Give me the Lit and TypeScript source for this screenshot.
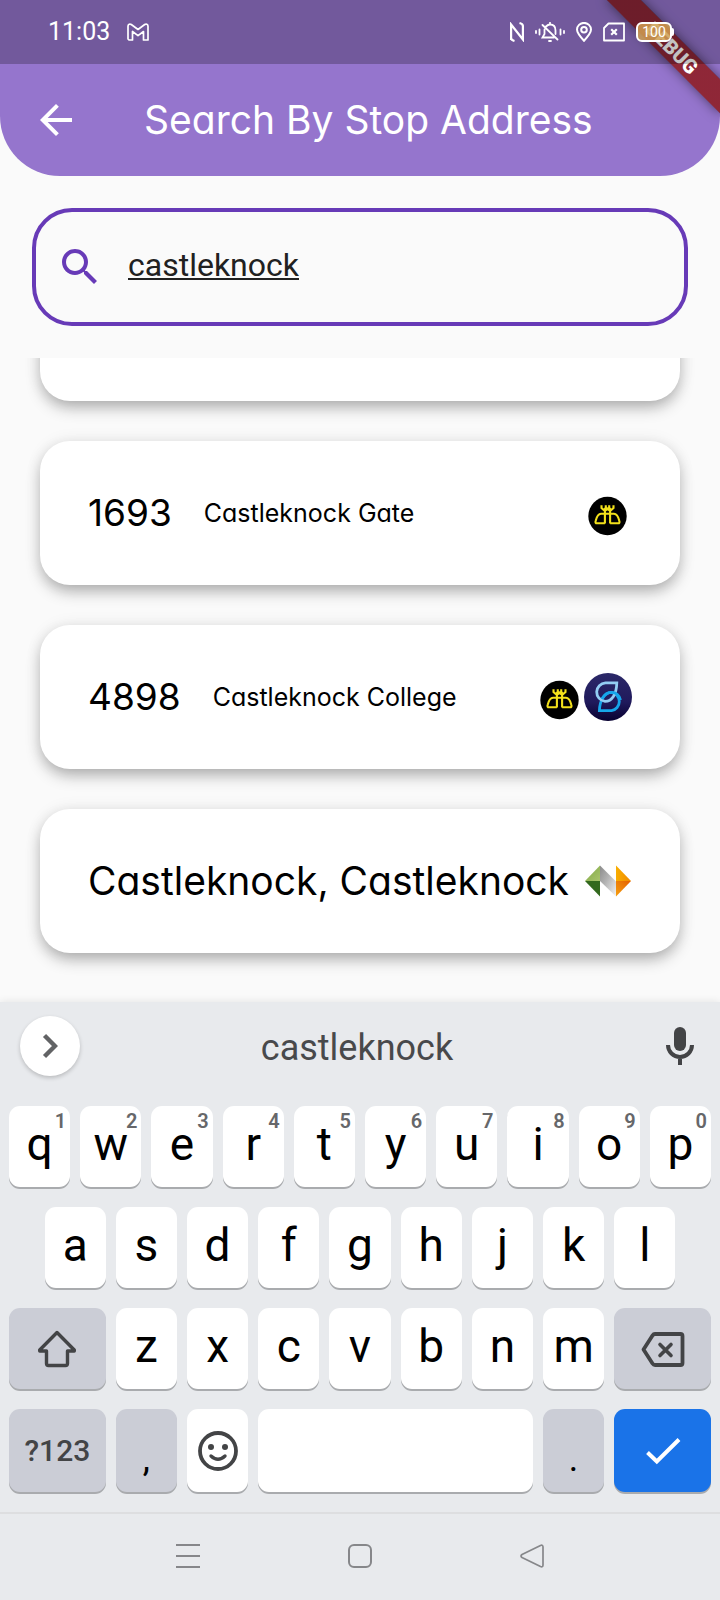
import { LitElement, html, css, nothing, type TemplateResult } from "lit";
import { customElement, property, state } from "lit/decorators.js";
import { classMap } from "lit/directives/class-map.js";

type Operator = "bus" | "swords" | "national";
interface Stop {
  code?: string;
  name: string;
  operators: Operator[];
}

const STOPS: Stop[] = [
  { code: "1693", name: "Castleknock Gate", operators: ["bus"] },
  { code: "4898", name: "Castleknock College", operators: ["bus", "swords"] },
  { name: "Castleknock, Castleknock", operators: ["national"] },
];

const busLogo = html`<svg class="logo" viewBox="-24 -24 48 48" aria-hidden="true">
  <circle cx="-0.500" cy="3" r="19.2" fill="#000" />
  <g transform="translate(-0.500 3)" fill="none" stroke="#f3e11b" stroke-width="2.1">
    <path d="M-6 -10.8V-8L-2.600 -5V7.500M-1.700 -10.800V-8.500L-3.500 -6M6 -10.800V-8L2.600 -5V7.500M1.700 -10.800V-8.500L3.500 -6M-2 -8.800L2 -5.500M2 -8.800L-2 -5.500" />
    <path stroke-linejoin="round"
      d="M-2.600 7.300H-10.500Q-12.600 7.300 -11.800 4.800Q-10 -2.200 -6.500 -2.200H6.500Q10 -2.200 11.800 4.800Q12.600 7.300 10.500 7.300H2.600" />
  </g>
</svg>`;

const swordsLogo = html`<svg class="logo" viewBox="-24 -24 48 48" aria-hidden="true">
  <defs>
    <linearGradient id="night" x1="0" y1="0" x2="0" y2="1">
      <stop offset="0" stop-color="#2b2868" />
      <stop offset=".6" stop-color="#201a5c" />
      <stop offset="1" stop-color="#070030" />
    </linearGradient>
  </defs>
  <circle r="24" fill="url(#night)" />
  <g fill="none" stroke-width="2.8">
    <path stroke="#16a6ea" d="M-8.600 13.700H3.500A9.500 9.300 0 0 0 3.500 -4.600C-3 -4.600 -8.300 3 -8.600 13.700z" />
    <path stroke="#93cdf3" d="M8.800 -14.200H-2.500A9.500 9.300 0 0 0 -3 4.300C4 4.300 8.500 -2.500 8.800 -14.200z" />
    <path stroke="#16a6ea" d="M-6 2C-3.500 -3 -1 -4.600 3.500 -4.600A9 9 0 0 1 12.500 3" />
  </g>
</svg>`;

const nationalLogo = html`<svg class="logo" viewBox="-24 -24 48 48" aria-hidden="true">
  <defs>
    <linearGradient id="leaf" x1="0" y1="0" x2="1" y2="1">
      <stop offset="0" stop-color="#7fa845" />
      <stop offset="1" stop-color="#a9c46c" />
    </linearGradient>
    <linearGradient id="steel" x1="0" y1="0" x2="1" y2="1">
      <stop offset="0" stop-color="#8b8b8b" />
      <stop offset=".45" stop-color="#b4b4b4" />
      <stop offset="1" stop-color="#f4f4f4" />
    </linearGradient>
    <linearGradient id="sun" x1="0" y1="0" x2="1" y2="0">
      <stop offset="0" stop-color="#f9ae00" />
      <stop offset="1" stop-color="#f08a00" />
    </linearGradient>
    <linearGradient id="ember" x1="0" y1="1" x2="1" y2="0">
      <stop offset="0" stop-color="#f6a010" />
      <stop offset="1" stop-color="#e45f00" />
    </linearGradient>
  </defs>
  <path fill="url(#leaf)" d="M-23 0 -8 -15.500V0z" />
  <path fill="#33691e" d="M-23 0H-8V15.500z" />
  <path fill="url(#steel)" d="M-8 -15.500 8 0.500V15.500L-8 0z" />
  <path fill="url(#sun)" d="M8 -15.500 23 0H8z" />
  <path fill="url(#ember)" d="M8 15.500V0H23z" />
</svg>`;

const LOGOS: Record<Operator, TemplateResult> = {
  bus: busLogo,
  swords: swordsLogo,
  national: nationalLogo,
};

@customElement("status-bar")
class StatusBar extends LitElement {
  static styles = css`
    :host {
      display: flex;
      align-items: center;
      justify-content: space-between;
      box-sizing: border-box;
      height: 64px;
      padding: 0 46px 0 48px;
      background: rgba(0, 0, 0, 0.235);
      color: #fff;
      font-family: Roboto, sans-serif;
    }
    .side {
      display: flex;
      align-items: center;
      gap: 11px;
    }
    .clock {
      font-size: 25px;
      line-height: 32px;
      margin-right: 6px;
    }
    svg {
      display: block;
      fill: none;
      stroke: #fff;
      stroke-width: 2;
    }
    .battery {
      display: flex;
      align-items: center;
    }
    .cell {
      box-sizing: border-box;
      width: 36px;
      height: 20px;
      border: 2px solid #fff;
      border-radius: 6px;
      background: rgba(216, 166, 84, 0.8);
      font-size: 14px;
      line-height: 16px;
      text-align: center;
    }
    .nub {
      width: 2px;
      height: 8px;
      border-radius: 0 2px 2px 0;
      background: #fff;
    }
  `;
  render() {
    return html`
      <div class="side">
        <span class="clock">11:03</span>
        <svg width="22" height="18" viewBox="0 0 22 18">
          <path stroke-width="1.7" stroke-linejoin="round"
            d="M1 16V3.200C1 1 3 .6 4.300 1.500L11 6.500 17.700 1.500C19 .6 21 1 21 3.200V17H16.500V8.500L11 12.600 5.500 8.500V17H2z" />
        </svg>
      </div>
      <div class="side">
        <svg width="14" height="20" viewBox="0 0 14 20">
          <path stroke-width="2.2" d="M1.100 18V2.500L12.900 17.500V3.500M1.100 10.500V16Q1.100 18 4.500 19M12.900 9.500V4Q12.900 2 9.500 1" />
        </svg>
        <svg width="30" height="20" viewBox="0 0 30 20">
          <path stroke-width="1.800" stroke-linecap="round"
            d="M1 9v2M4.500 7.500v5M29 9v2M25.500 7.500v5M15 .8v1.400M14 19h2M11 4.500Q13 2.500 15 2.500C19 2.500 20.500 5.500 20.500 8.500V12M9.500 7.500V12L7.500 15.500H19M7.500 3 22.500 17.500" />
        </svg>
        <svg width="16" height="20" viewBox="0 0 16 20">
          <path d="M8 18.800C4 14.500 1 11 1 7.600A7 6.700 0 0 1 15 7.600C15 11 12 14.500 8 18.800z" />
          <circle cx="8" cy="7.800" r="2.800" />
        </svg>
        <svg width="22" height="20" viewBox="0 0 22 20">
          <path stroke-width="1.800" stroke-linejoin="round" d="M5.500 1.500H21V18.500H1V6z" />
          <path stroke-width="2.200" d="M8.200 7.200l5.600 5.600M13.800 7.200l-5.600 5.600" />
        </svg>
        <div class="battery"><span class="cell">100</span><span class="nub"></span></div>
      </div>
    `;
  }
}

@customElement("stop-card")
class StopCard extends LitElement {
  @property({ attribute: false }) stop?: Stop;
  static styles = css`
    :host {
      display: flex;
      flex: none;
      align-items: center;
      box-sizing: border-box;
      height: 144px;
      padding: 0 48px;
      border-radius: 30px;
      background: #fff;
      box-shadow: 0 8px 16px -2px rgba(0, 0, 0, 0.3), 0 0 16px rgba(0, 0, 0, 0.08);
      color: #000;
      font-family: Inter, sans-serif;
      font-feature-settings: "cv11";
    }
    .code {
      margin-right: 32px;
      font-size: 37px;
      line-height: 48px;
    }
    .name {
      font-size: 25px;
      line-height: 32px;
    }
    .solo {
      font-size: 39px;
      line-height: 48px;
      white-space: nowrap;
    }
    .operators {
      display: flex;
      margin-left: auto;
    }
    .logo {
      display: block;
      width: 48px;
      height: 48px;
    }
  `;
  render() {
    const stop = this.stop;
    if (!stop) return nothing;
    return html`
      ${stop.code ? html`<span class="code">${stop.code}</span>` : nothing}
      <span class=${stop.code ? "name" : "solo"}>${stop.name}</span>
      <span class="operators">${stop.operators.map((o) => LOGOS[o])}</span>
    `;
  }
}

@customElement("soft-keyboard")
class SoftKeyboard extends LitElement {
  @property() suggestion = "";
  static styles = css`
    :host {
      display: block;
      background: #e8eaed;
      box-shadow: 0 0 8px rgba(0, 0, 0, 0.1);
      font-family: Roboto, sans-serif;
    }
    button {
      margin: 0;
      padding: 0;
      border: 0;
      background: none;
      color: inherit;
      font: inherit;
    }
    svg {
      display: block;
      fill: none;
      stroke: #434446;
    }
    .strip {
      display: grid;
      grid-template-columns: 60px 1fr 80px;
      align-items: center;
      height: 88px;
      padding-left: 20px;
    }
    .strip .more {
      display: grid;
      place-items: center;
      width: 60px;
      height: 60px;
      border-radius: 50%;
      background: #fff;
      box-shadow: 0 2px 4px rgba(0, 0, 0, 0.2);
    }
    .strip .word {
      padding: 4px 6px 0 0;
      color: #48494b;
      font-size: 36px;
      line-height: 44px;
    }
    .strip .mic {
      display: grid;
      place-items: center;
    }
    .keys {
      display: grid;
      grid-template-columns: repeat(20, 1fr);
      grid-template-rows: 81px 81px 81px 83px;
      gap: 20px 10px;
      padding: 16px 9px 20px;
    }
    .keys .key {
      position: relative;
      display: flex;
      align-items: center;
      justify-content: center;
      grid-column: span 2;
      border-radius: 11px;
      background: #fff;
      box-shadow: 0 2px 0 #a9abae;
      color: #000;
      font-size: 46px;
    }
    .key .glyph {
      padding-bottom: 6px;
      line-height: 54px;
    }
    .keys .indent {
      grid-column: 2 / span 2;
    }
    .keys .wide {
      grid-column: span 3;
    }
    .keys .space {
      grid-column: span 8;
    }
    .keys .grey {
      background: #cbcdd6;
    }
    .keys .enter {
      background: #1a73e8;
    }
    .key .hint {
      position: absolute;
      top: 5px;
      right: 4px;
      color: #66676a;
      font-size: 20px;
      font-weight: 600;
      line-height: 20px;
    }
    .key .mode {
      color: #434446;
      font-size: 30px;
      font-weight: 500;
    }
    .key .mark {
      padding-top: 16px;
      font-size: 36px;
      line-height: 40px;
    }
    .nav {
      display: grid;
      grid-template-columns: repeat(3, 1fr);
      height: 84px;
      padding: 0 102px 2px;
      border-top: 2px solid #dddee0;
    }
    .nav button {
      display: grid;
      place-items: center;
    }
    .nav svg {
      stroke: #86878a;
      stroke-width: 2;
    }
  `;

  private letter(char: string, hint = "", indent = false) {
    return html`<button class=${classMap({ key: true, indent })}>
      <span class="glyph">${char}</span>${hint ? html`<span class="hint">${hint}</span>` : nothing}
    </button>`;
  }

  render() {
    return html`
      <div class="strip">
        <button class="more" aria-label="More">
          <svg width="16" height="26" viewBox="0 0 16 26">
            <path d="M2.500 2.500 13 13 2.500 23.500" stroke="#626365" stroke-width="4.400" />
          </svg>
        </button>
        <button class="word">${this.suggestion}</button>
        <button class="mic" aria-label="Voice input">
          <svg width="28" height="38" viewBox="0 0 28 38">
            <rect x="8" y="0" width="12" height="24" rx="6" fill="#434446" stroke="none" />
            <path d="M2 18a12 12 0 0 0 24 0M14 30v8" stroke-width="4" />
          </svg>
        </button>
      </div>
      <div class="keys">
        ${[..."qwertyuiop"].map((c, i) => this.letter(c, String((i + 1) % 10)))}
        ${[..."asdfghjkl"].map((c, i) => this.letter(c, "", i === 0))}
        <button class="key grey wide" aria-label="Shift">
          <svg width="40" height="40" viewBox="0 0 40 40">
            <path stroke-width="3.400" stroke-linejoin="round"
              d="M20 3.500 37.300 21V22H30.500V34.500Q30.500 36.500 28.500 36.500H11.500Q9.500 36.500 9.500 34.500V22H2.700V21z" />
          </svg>
        </button>
        ${[..."zxcvbnm"].map((c) => this.letter(c))}
        <button class="key grey wide" aria-label="Backspace">
          <svg width="44" height="36" viewBox="0 0 44 36">
            <path stroke-width="3.800" stroke-linejoin="round"
              d="M14 3H39.500A2 2 0 0 1 41.500 5V32A2 2 0 0 1 39.500 34H14Q12.500 34 11.500 32.500L2.500 18.500 11.500 4.500Q12.500 3 14 3z" />
            <path stroke-width="3.600" stroke-linecap="round" d="M19 13.500l11 11M30 13.500l-11 11" />
          </svg>
        </button>
        <button class="key grey wide"><span class="mode">?123</span></button>
        <button class="key grey"><span class="mark">,</span></button>
        <button class="key" aria-label="Emoji">
          <svg width="40" height="40" viewBox="0 0 40 40">
            <circle cx="20" cy="20" r="18" stroke-width="3.800" />
            <circle cx="13" cy="16" r="3" fill="#434446" stroke="none" />
            <circle cx="27" cy="16" r="3" fill="#434446" stroke="none" />
            <path d="M13 25q7 6.500 14 0" stroke-width="3.400" stroke-linecap="round" />
          </svg>
        </button>
        <button class="key space" aria-label="Space"></button>
        <button class="key grey"><span class="mark">.</span></button>
        <button class="key enter wide" aria-label="Done">
          <svg width="36" height="28" viewBox="0 0 36 28">
            <path d="M2.500 15.500 11.800 24.500 34 2.500" stroke="#fff" stroke-width="4" />
          </svg>
        </button>
      </div>
      <div class="nav">
        <button aria-label="Recents">
          <svg width="24" height="24" viewBox="0 0 24 24"><path d="M0 1h24M0 12h24M0 23h24" /></svg>
        </button>
        <button aria-label="Home">
          <svg width="24" height="24" viewBox="0 0 24 24"><rect x="1" y="1" width="22" height="22" rx="5" /></svg>
        </button>
        <button aria-label="Back">
          <svg width="24" height="24" viewBox="0 0 24 24">
            <path stroke-width="1.700" stroke-linejoin="round"
              d="M20.500 1.500Q23 .5 23 3V21Q23 23.500 20.500 22.500L2 13.500Q0 12 2 10.500z" />
          </svg>
        </button>
      </div>
    `;
  }
}

@customElement("app-root")
class AppRoot extends LitElement {
  @state() private query = "castleknock";
  static styles = css`
    :host {
      display: block;
    }
    .page {
      position: relative;
      display: flex;
      flex-direction: column;
      height: 100vh;
      overflow: hidden;
      background: #fafafa;
    }
    .top {
      border-radius: 0 0 60px 60px;
      background: #9575cd;
    }
    .status {
      position: relative;
      z-index: 2;
    }
    .toolbar {
      display: flex;
      align-items: center;
      gap: 64px;
      height: 112px;
      padding: 0 32px;
    }
    .back {
      padding: 0;
      border: 0;
      background: none;
    }
    .icon {
      display: block;
      width: 48px;
      height: 48px;
    }
    .title {
      margin: 0;
      color: #fff;
      font-family: Inter, sans-serif;
      font-feature-settings: "cv11";
      font-size: 39px;
      font-weight: 400;
      line-height: 48px;
      white-space: nowrap;
    }
    .ribbon {
      position: absolute;
      z-index: 1;
      top: 56px;
      right: -80px;
      width: 160px;
      height: 24px;
      transform: rotate(45deg);
      transform-origin: 50% -56px;
      background: linear-gradient(rgba(183, 28, 28, 0.63), rgba(183, 28, 28, 0.63)) rgba(0, 0, 0, 0.5);
      box-shadow: 0 0 12px rgba(0, 0, 0, 0.5);
      color: #fff;
      font-family: Roboto, sans-serif;
      font-size: 20px;
      font-weight: 900;
      line-height: 24px;
      text-align: center;
    }
    .search {
      display: flex;
      align-items: center;
      gap: 24px;
      box-sizing: border-box;
      height: 118px;
      margin: 32px 32px 0;
      padding: 0 20px;
      border: 4px solid #673ab7;
      border-radius: 40px;
    }
    .query {
      flex: 1;
      min-width: 0;
      padding: 0 0 4px;
      border: 0;
      outline: 0;
      background: none;
      color: #212121;
      font-family: Roboto, sans-serif;
      font-size: 32px;
      line-height: 40px;
      text-decoration: underline;
      text-decoration-thickness: 2px;
      text-decoration-skip-ink: none;
      text-underline-offset: 2px;
    }
    .results {
      display: flex;
      flex: 1;
      flex-direction: column;
      justify-content: flex-end;
      gap: 40px;
      min-height: 0;
      margin-top: 32px;
      padding: 0 40px 49px;
      overflow: hidden;
    }
    .keyboard {
      flex: none;
    }
  `;
  render() {
    return html`
      <div class="page">
        <header class="top">
          <status-bar class="status"></status-bar>
          <div class="toolbar">
            <button class="back" aria-label="Back">
              <svg class="icon" viewBox="0 0 24 24" fill="#fff">
                <path d="M20 11H7.830l5.590-5.590L12 4l-8 8 8 8 1.410-1.410L7.830 13H20v-2z" />
              </svg>
            </button>
            <h1 class="title">Search By Stop Address</h1>
          </div>
        </header>
        <div class="ribbon">DEBUG</div>
        <label class="search">
          <svg class="icon" viewBox="0 0 24 24" fill="#673ab7" role="img" aria-label="Stop address">
            <path
              d="M15.500 14h-.79l-.28-.27C15.410 12.590 16 11.110 16 9.500 16 5.910 13.090 3 9.500 3S3 5.910 3 9.500 5.910 16 9.500 16c1.610 0 3.090-.59 4.230-1.570l.27.28v.79l5 4.990L20.490 19l-4.990-5zm-6 0C7.010 14 5 11.990 5 9.500S7.010 5 9.500 5 14 7.010 14 9.500 11.990 14 9.500 14z" />
          </svg>
          <input
            class="query"
            type="text"
            spellcheck="false"
            .value=${this.query}
            @input=${(e: InputEvent) => (this.query = (e.target as HTMLInputElement).value)} />
        </label>
        <main class="results">
          <stop-card></stop-card>
          ${STOPS.map((stop) => html`<stop-card .stop=${stop}></stop-card>`)}
        </main>
        <soft-keyboard class="keyboard" .suggestion=${this.query}></soft-keyboard>
      </div>
    `;
  }
}
